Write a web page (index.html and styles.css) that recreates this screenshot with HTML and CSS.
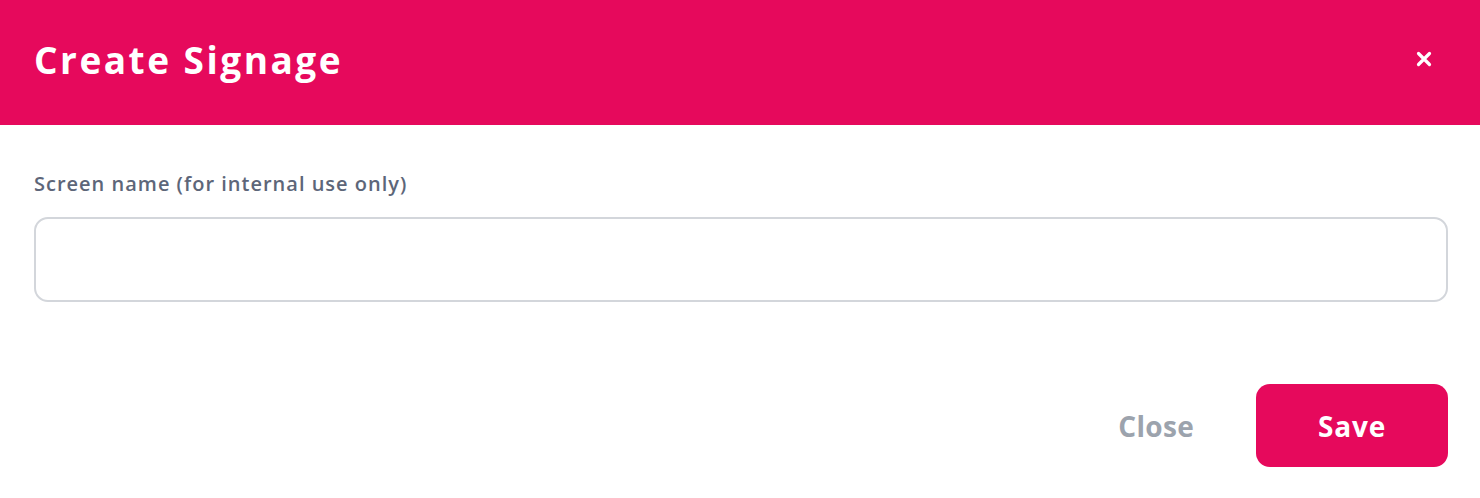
FILE: index.html
```html
<!DOCTYPE html>
<html lang="en">
<head>
<meta charset="utf-8">
<title>Create Signage</title>
<link rel="stylesheet" href="styles.css">
</head>
<body>
<div class="modal">
  <header class="modal-header">
    <h1 class="modal-title">Create Signage</h1>
    <button class="icon-close" aria-label="Close">
      <svg width="16" height="16" viewBox="0 0 16 16"><path d="M2.5 2.5 L13.5 13.5 M13.5 2.5 L2.5 13.5" stroke="#fff" stroke-width="3.2" stroke-linecap="round"/></svg>
    </button>
  </header>
  <div class="modal-body">
    <label class="field-label" for="screen-name">Screen name (for internal use only)</label>
    <input class="field-input" id="screen-name" type="text">
  </div>
  <footer class="modal-footer">
    <button class="btn-text">Close</button>
    <button class="btn-primary">Save</button>
  </footer>
</div>
</body>
</html>
```

FILE: styles.css
```css
* { box-sizing: border-box; }
html, body { margin: 0; padding: 0; background: #fff; }
body { font-family: "Open Sans", "Noto Sans", sans-serif; width: 1480px; height: 498px; overflow: hidden; }
.modal { display: flex; flex-direction: column; }
.modal-header {
  height: 125px;
  background: #e6095c;
  display: flex;
  align-items: center;
  justify-content: space-between;
  padding: 0 48px 0 34px;
}
.modal-title {
  margin: 0;
  color: #fff;
  font-size: 37px;
  font-weight: 700;
  letter-spacing: 2.5px;
  line-height: 1;
  padding-bottom: 6px;
}
.icon-close {
  background: none;
  border: 0;
  padding: 0;
  width: 16px;
  height: 16px;
  display: flex;
  cursor: pointer;
  margin-bottom: 7px;
}
.modal-body {
  padding: 46px 32px 0 34px;
  display: flex;
  flex-direction: column;
}
.field-label {
  font-size: 20px;
  font-weight: 600;
  color: #5d6679;
  line-height: 26px;
  letter-spacing: 1px;
}
.field-input {
  margin-top: 20px;
  height: 85px;
  border: 2px solid #d3d6db;
  border-radius: 14px;
  font-size: 18px;
  padding: 0 18px;
  outline: none;
}
.modal-footer {
  display: flex;
  justify-content: flex-end;
  align-items: center;
  padding: 82px 32px 0 0;
  gap: 62px;
}
.btn-text {
  background: none;
  border: 0;
  padding: 0;
  font-family: inherit;
  font-size: 28px;
  font-weight: 700;
  color: #9ca3ad;
  letter-spacing: 0.3px;
  cursor: pointer;
}
.btn-primary {
  width: 192px;
  height: 83px;
  border: 0;
  border-radius: 14px;
  background: #e6095c;
  color: #fff;
  font-family: inherit;
  font-size: 28px;
  font-weight: 700;
  letter-spacing: 0.8px;
  cursor: pointer;
}
```
